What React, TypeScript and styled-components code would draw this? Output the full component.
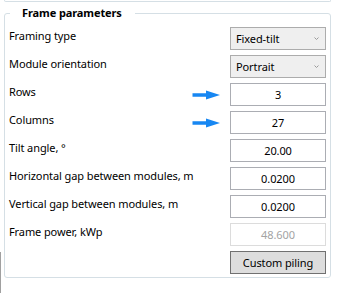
import styled, { createGlobalStyle } from "styled-components";

const GlobalStyle = createGlobalStyle`
  body {
    margin: 0;
    background: #ffffff;
    font-family: "Noto Sans", "Segoe UI", sans-serif;
    font-size: 11px;
    letter-spacing: -0.1px;
    color: #000000;
  }
`;

interface Row {
  label: string;
  kind: "combo" | "text" | "button";
  value: string;
  arrow?: boolean;
  disabled?: boolean;
}

const rows: Row[] = [
  { label: "Framing type", kind: "combo", value: "Fixed-tilt" },
  { label: "Module orientation", kind: "combo", value: "Portrait" },
  { label: "Rows", kind: "text", value: "3", arrow: true },
  { label: "Columns", kind: "text", value: "27", arrow: true },
  { label: "Tilt angle, °", kind: "text", value: "20.00" },
  { label: "Horizontal gap between modules, m", kind: "text", value: "0.0200" },
  { label: "Vertical gap between modules, m", kind: "text", value: "0.0200" },
  { label: "Frame power, kWp", kind: "text", value: "48.600", disabled: true },
  { label: "", kind: "button", value: "Custom piling" },
];

const Arrow = () => (
  <ArrowSvg width="28" height="10" viewBox="0 0 28 10">
    <path d="M0.5 3.3 H14 V0.6 L28 5 L14 9.4 V6.7 H0.5 Z" fill="#1787f2" />
  </ArrowSvg>
);

const Chevron = () => (
  <svg width="5" height="3" viewBox="0 0 5 3">
    <path d="M0.5 0.5 L2.5 2.5 L4.5 0.5" stroke="#9a9a9a" strokeWidth="1" fill="none" />
  </svg>
);

const App = () => {
  return (
    <Page>
      <GlobalStyle />
      <PrevEdge />
      <Group>
        <Title>Frame parameters</Title>
        <Form>
          {rows.map((row, i) => (
            <FormRow key={i}>
              <Label>
                <span>{row.label}</span>
                {row.arrow && <Arrow />}
              </Label>
              {row.kind === "combo" && (
                <Combo>
                  <span>{row.value}</span>
                  <Chevron />
                </Combo>
              )}
              {row.kind === "text" && (
                <TextBox $disabled={row.disabled}>{row.value}</TextBox>
              )}
              {row.kind === "button" && <Button>{row.value}</Button>}
            </FormRow>
          ))}
        </Form>
      </Group>
    </Page>
  );
};
export default App;

const Page = styled.div`
  position: relative;
  width: 337px;
  height: 293px;
  box-sizing: border-box;
  padding: 0 6px 0 4px;
  overflow: hidden;

  &::before {
    content: "";
    position: absolute;
    left: 0;
    top: 252px;
    bottom: 0;
    width: 1px;
    background: #a0a0a0;
  }
`;

const PrevEdge = styled.div`
  height: 2px;
  box-sizing: border-box;
  border: 1px solid #d5dfe5;
  border-top: none;
  border-radius: 0 0 3px 3px;
`;

const Group = styled.fieldset`
  margin: 3px 0 0 0;
  padding: 6px 4px 3px 4px;
  border: 1px solid #d5dfe5;
  border-radius: 3px;
  min-width: 0;
`;

const Title = styled.legend`
  padding: 0 13px 0 12px;
  margin-left: 1px;
  font-weight: bold;
  line-height: 16px;
`;

const Form = styled.div`
  display: flex;
  flex-direction: column;
  gap: 5px;
`;

const FormRow = styled.div`
  display: grid;
  grid-template-columns: 1fr 96px;
  height: 23px;
`;

const Label = styled.div`
  display: flex;
  justify-content: space-between;
  align-items: flex-start;
  line-height: 18px;
  white-space: nowrap;
`;

const ArrowSvg = styled.svg`
  margin: 7px 10px 0 0;
`;

const Combo = styled.div`
  display: flex;
  align-items: center;
  justify-content: space-between;
  box-sizing: border-box;
  height: 23px;
  padding: 0 6px 0 5px;
  border: 1px solid #acacac;
  background: #efefef;
`;

const TextBox = styled.div<{ $disabled?: boolean }>`
  box-sizing: border-box;
  height: 23px;
  line-height: 21px;
  text-align: center;
  background: #ffffff;
  border: 1px solid ${(p) => (p.$disabled ? "#dcdcdc" : "#abadb3")};
  color: ${(p) => (p.$disabled ? "#a3a3a3" : "#000000")};
`;

const Button = styled.div`
  box-sizing: border-box;
  height: 23px;
  line-height: 21px;
  text-align: center;
  background: #dddddd;
  border: 1px solid #707070;
`;
